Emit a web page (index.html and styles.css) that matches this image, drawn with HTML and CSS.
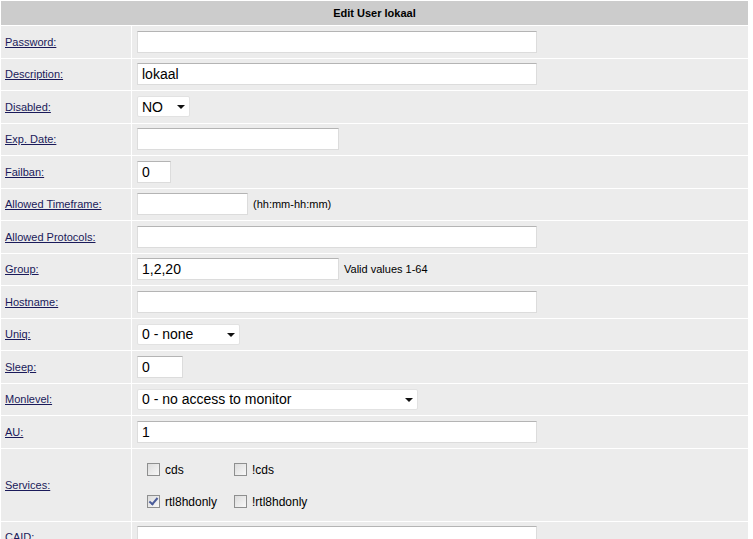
FILE: index.html
```html
<!DOCTYPE html>
<html lang="en">
<head>
  <meta charset="UTF-8" />
  <title>Edit User lokaal</title>
  <link rel="stylesheet" href="styles.css">
</head>
<body>
  <form>
    <table class="edit">
      <tr>
        <th colspan="2">Edit User lokaal</th>
      </tr>
      <tr>
        <td class="lbl"><a href="#">Password:</a></td>
        <td><input type="text" class="w400"></td>
      </tr>
      <tr>
        <td class="lbl"><a href="#">Description:</a></td>
        <td><input type="text" class="w400" value="lokaal"></td>
      </tr>
      <tr>
        <td class="lbl"><a href="#">Disabled:</a></td>
        <td><span class="sel w53"><select><option>NO</option><option>YES</option></select></span></td>
      </tr>
      <tr>
        <td class="lbl"><a href="#">Exp. Date:</a></td>
        <td><input type="text" class="w202"></td>
      </tr>
      <tr>
        <td class="lbl"><a href="#">Failban:</a></td>
        <td><input type="text" class="w34" value="0"></td>
      </tr>
      <tr>
        <td class="lbl"><a href="#">Allowed Timeframe:</a></td>
        <td><input type="text" class="w111"><span class="hint">(hh:mm-hh:mm)</span></td>
      </tr>
      <tr>
        <td class="lbl"><a href="#">Allowed Protocols:</a></td>
        <td><input type="text" class="w400"></td>
      </tr>
      <tr>
        <td class="lbl"><a href="#">Group:</a></td>
        <td><input type="text" class="w202" value="1,2,20"><span class="hint">Valid values 1-64</span></td>
      </tr>
      <tr>
        <td class="lbl"><a href="#">Hostname:</a></td>
        <td><input type="text" class="w400"></td>
      </tr>
      <tr>
        <td class="lbl"><a href="#">Uniq:</a></td>
        <td><span class="sel w103"><select><option>0 - none</option></select></span></td>
      </tr>
      <tr>
        <td class="lbl"><a href="#">Sleep:</a></td>
        <td><input type="text" class="w46" value="0"></td>
      </tr>
      <tr>
        <td class="lbl"><a href="#">Monlevel:</a></td>
        <td><span class="sel w281"><select><option>0 - no access to monitor</option></select></span></td>
      </tr>
      <tr>
        <td class="lbl"><a href="#">AU:</a></td>
        <td><input type="text" class="w400" value="1"></td>
      </tr>
      <tr class="tall">
        <td class="lbl"><a href="#">Services:</a></td>
        <td>
          <div class="services">
            <label><input type="checkbox"> cds</label>
            <label><input type="checkbox"> !cds</label>
            <label><input type="checkbox" checked> rtl8hdonly</label>
            <label><input type="checkbox"> !rtl8hdonly</label>
          </div>
        </td>
      </tr>
      <tr>
        <td class="lbl"><a href="#">CAID:</a></td>
        <td><input type="text" class="w400"></td>
      </tr>
    </table>
  </form>
</body>
</html>
```

FILE: styles.css
```css
body {
  margin: 0;
  background: #ffffff;
  font-family: 'Liberation Sans', Arial, sans-serif;
  font-size: 11px;
  color: #000;
}

form {
  margin: 0;
}

table.edit {
  width: 749px;
  border-spacing: 1px;
  border-collapse: separate;
}

table.edit th {
  background: #cccccc;
  height: 24px;
  padding: 0;
  font-size: 11px;
  font-weight: bold;
  text-align: center;
  vertical-align: middle;
}

table.edit td {
  background: #ececec;
  height: 31.5px;
  padding: 0 5px;
  vertical-align: middle;
  white-space: nowrap;
}

table.edit td.lbl {
  width: 126px;
  padding: 0 0 0 4px;
}

table.edit tr.tall td {
  height: 72px;
}

td.lbl a {
  color: #1a1a5a;
  text-decoration: underline;
  font-size: 11px;
}

input[type="text"] {
  box-sizing: border-box;
  height: 22px;
  margin: 0;
  padding: 0 4px;
  border: 1px solid #dcdcdc;
  border-top-color: #b4b4b4;
  background: #fff;
  font-family: 'Liberation Sans', Arial, sans-serif;
  font-size: 14px;
  color: #000;
  vertical-align: middle;
  outline: none;
}

.w400 { width: 400px; }
.w202 { width: 202px; }
.w111 { width: 111px; }
.w46 { width: 46px; }
.w34 { width: 34px; }

.hint {
  margin-left: 5px;
  font-size: 11px;
  vertical-align: middle;
}

.sel {
  position: relative;
  display: inline-block;
  vertical-align: middle;
}

.sel select {
  -webkit-appearance: none;
  appearance: none;
  box-sizing: border-box;
  width: 100%;
  height: 21px;
  margin: 0;
  padding: 0 4px;
  border: 1px solid #e2e2e2;
  border-radius: 2px;
  background: #fff;
  font-family: 'Liberation Sans', Arial, sans-serif;
  font-size: 14px;
  color: #000;
  outline: none;
}

.sel::after {
  content: "";
  position: absolute;
  right: 5px;
  top: 9px;
  border-left: 4px solid transparent;
  border-right: 4px solid transparent;
  border-top: 4px solid #111;
  pointer-events: none;
}

.sel.w53 { width: 53px; }
.sel.w103 { width: 103px; }
.sel.w281 { width: 281px; }

.services {
  display: grid;
  grid-template-columns: 87px auto;
  grid-auto-rows: 32px;
  padding: 2px 0 0 10px;
}

.services label {
  display: flex;
  align-items: center;
  font-size: 12px;
}

.services input[type="checkbox"] {
  -webkit-appearance: none;
  appearance: none;
  position: relative;
  box-sizing: border-box;
  width: 13px;
  height: 13px;
  margin: 0 5px 0 0;
  border: 1px solid #8e8f8f;
  background: linear-gradient(135deg, #dcdcdc, #f8f8f8);
}

.services input[type="checkbox"]:checked::after {
  content: "";
  position: absolute;
  left: 3px;
  top: 0px;
  width: 3px;
  height: 7px;
  border-right: 2px solid #4a5c9a;
  border-bottom: 2px solid #4a5c9a;
  transform: rotate(40deg);
}
```
